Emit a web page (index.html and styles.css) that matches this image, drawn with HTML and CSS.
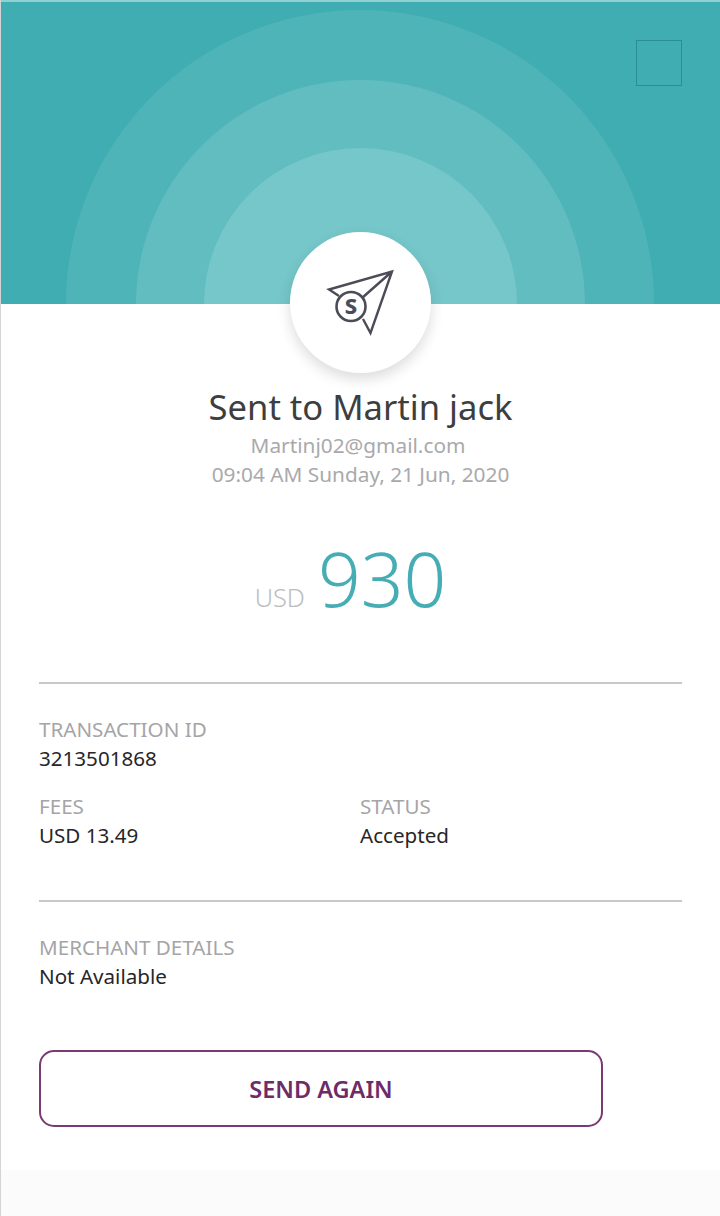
FILE: index.html
```html
<!DOCTYPE html>
<html lang="en">
<head>
<meta charset="utf-8">
<title>Sent to Martin jack</title>
<link rel="stylesheet" href="styles.css">
</head>
<body>
<div class="page">
  <header class="hero">
    <span class="ring ring-outer"></span>
    <span class="ring ring-mid"></span>
    <span class="ring ring-inner"></span>
    <span class="close-box"></span>
  </header>
  <div class="badge">
    <svg class="plane" viewBox="0 0 140 140" width="140" height="140" aria-hidden="true">
      <path d="M49 64 39 57.500 102 39.500 80.500 101 73 87M102 39.500 72 66" fill="none" stroke="#4c4c58" stroke-width="2.400" stroke-linejoin="miter"/>
      <circle cx="61" cy="74.500" r="14.500" fill="#fff" stroke="#4c4c58" stroke-width="2.600"/>
      <text class="plane-s" x="61" y="82" text-anchor="middle">S</text>
    </svg>
  </div>
  <main class="content">
    <section class="summary">
      <h1 class="title">Sent to Martin jack</h1>
      <p class="sub sub-email">Martinj02@gmail.com</p>
      <p class="sub">09:04 AM Sunday, 21 Jun, 2020</p>
      <p class="amount"><span class="currency">USD</span><span class="value">930</span></p>
    </section>
    <section class="details details-first">
      <div class="field">
        <div class="label">TRANSACTION ID</div>
        <div class="data">3213501868</div>
      </div>
      <div class="field-row">
        <div class="field">
          <div class="label">FEES</div>
          <div class="data">USD 13.49</div>
        </div>
        <div class="field">
          <div class="label">STATUS</div>
          <div class="data">Accepted</div>
        </div>
      </div>
    </section>
    <section class="details details-second">
      <div class="field">
        <div class="label">MERCHANT DETAILS</div>
        <div class="data">Not Available</div>
      </div>
    </section>
    <button class="again" type="button">SEND AGAIN</button>
  </main>
  <footer class="foot"></footer>
</div>
</body>
</html>
```
FILE: styles.css
```css
* { box-sizing: border-box; }
html, body { margin: 0; padding: 0; }
body { background: #fff; font-family: "Noto Sans", "Open Sans", sans-serif; }
.page {
  position: relative;
  width: 720px;
  height: 1216px;
  display: flex;
  flex-direction: column;
  overflow: hidden;
  border-left: 1px solid #d4d4d6;
}
.hero {
  position: relative;
  height: 304px;
  flex: none;
  background: #3fadb1;
  border-top: 2px solid #8fd0d2;
  overflow: hidden;
}
.ring { position: absolute; border-radius: 50%; }
.ring-outer { left: 65px; top: 8px; width: 588px; height: 588px; background: #4fb4b8; }
.ring-mid { left: 135px; top: 78px; width: 449px; height: 449px; background: #62bdc1; }
.ring-inner { left: 203px; top: 146px; width: 313px; height: 313px; background: #76c7ca; }
.close-box {
  position: absolute;
  left: 635px;
  top: 38px;
  width: 46px;
  height: 46px;
  border: 1px solid #2a8f94;
}
.badge {
  position: absolute;
  left: 289px;
  top: 232px;
  width: 141px;
  height: 141px;
  border-radius: 50%;
  background: #fff;
  box-shadow: 0 6px 14px rgba(0, 0, 0, .14);
}
.plane { display: block; }
.plane-s { font: 800 22px "Noto Sans", sans-serif; fill: #4c4c58; }
.content {
  flex: 1;
  padding: 82px 38px 0;
  display: flex;
  flex-direction: column;
}
.summary { text-align: center; }
.title { margin: 0 0 3px; font-size: 34.600px; line-height: 42px; font-weight: 400; color: #3c3e40; }
.sub { margin: 0; font-size: 20.800px; line-height: 29px; color: #a9a9ab; }
.sub-email { padding-right: 5px; }
.amount { margin: 45px 20px 0 0; height: 148px; line-height: 88px; color: #a9a9ab; }
.currency { margin-right: 13px; font-size: 25.400px; font-weight: 300; color: #bcbcbe; }
.value { font-size: 75px; font-weight: 300; color: #47adb5; }
.details { border-top: 2px solid #c8c8ca; width: 643px; }
.details-first { padding: 31px 0 0; height: 218px; }
.details-second { padding: 31px 0 0; height: 150px; }
.field-row { display: grid; grid-template-columns: 321px 1fr; margin-top: 19px; }
.label { font-size: 20.600px; line-height: 29px; color: #a5a5a7; }
.data { font-size: 20.600px; line-height: 29px; color: #26262a; }
.again {
  width: 564px;
  height: 77px;
  border: 2px solid #7a3a73;
  border-radius: 15px;
  background: #fff;
  color: #6d2b68;
  font: 600 23.500px "Noto Sans", sans-serif;
}
.foot { height: 46px; flex: none; background: #fbfbfb; }
```
